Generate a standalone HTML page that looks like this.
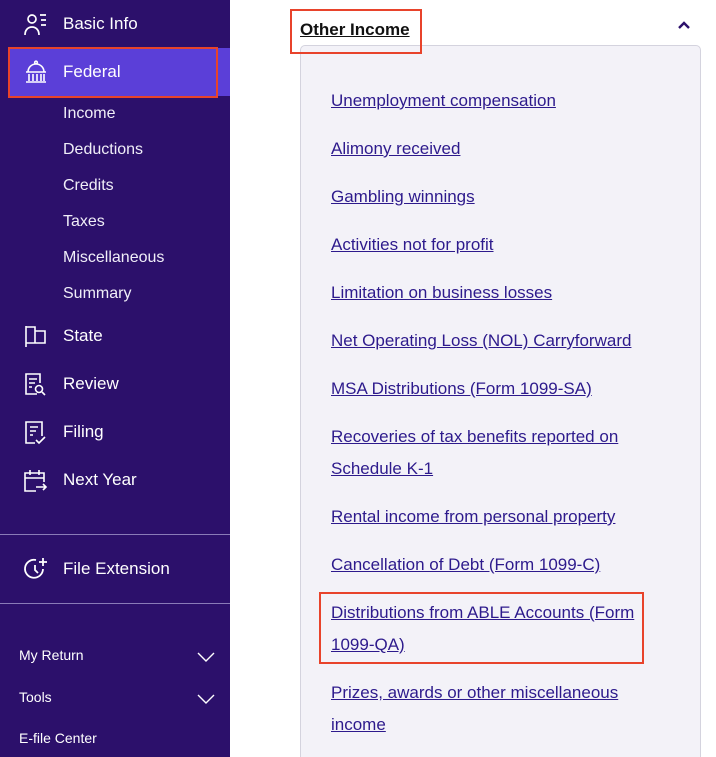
<!DOCTYPE html>
<html><head><style>
*{margin:0;padding:0;box-sizing:border-box}
html,body{width:716px;height:757px;overflow:hidden}
body{background:#fff;font-family:"Liberation Sans",sans-serif;position:relative}
#sb{position:absolute;left:0;top:0;width:230px;height:757px;background:#2c106b;color:#fff}
.it{position:absolute;left:63px;font-size:17px;line-height:20px}
.sub{position:absolute;left:63px;font-size:16px;line-height:20px;color:#f0eef8}
.ic{position:absolute;left:23px}
.sm{position:absolute;left:19px;font-size:14px;line-height:18px}
.hr{position:absolute;left:0;width:230px;height:1px;background:#8a7bb8}
.chev{position:absolute;left:196px}
#main a{position:absolute;left:331px;font-size:17px;line-height:32px;color:#2d1a8c;text-decoration:underline;width:315px}
.red{position:absolute;border:2px solid #e8432b}
</style></head><body>
<div id="sb">
<svg class="ic" style="top:12px" width="26" height="24" viewBox="0 0 26 24" fill="none" stroke="#fff" stroke-width="1.7"><circle cx="9" cy="7" r="4"/><path d="M2 23c0-5 3-8 7-8s7 3 7 8"/><path d="M17 3h6M18 8h5M18 13h5"/></svg>
<div class="it" style="top:14px">Basic Info</div>
<div style="position:absolute;left:9px;top:48px;width:221px;height:48px;background:#5b3fd8"></div>
<svg class="ic" style="top:60px" width="26" height="24" viewBox="0 0 26 24" fill="none" stroke="#fff" stroke-width="1.6"><circle cx="13" cy="2.5" r="1.3"/><path d="M5 12a8 8 0 0 1 16 0"/><path d="M3 12h20M3 22h20M6 14v7M10 14v7M14 14v7M18 14v7M21 14v7"/></svg>
<div class="it" style="top:62px">Federal</div>
<div class="sub" style="top:104px">Income</div>
<div class="sub" style="top:140px">Deductions</div>
<div class="sub" style="top:176px">Credits</div>
<div class="sub" style="top:212px">Taxes</div>
<div class="sub" style="top:248px">Miscellaneous</div>
<div class="sub" style="top:284px">Summary</div>
<svg class="ic" style="top:324px" width="26" height="24" viewBox="0 0 26 24" fill="none" stroke="#fff" stroke-width="1.6"><path d="M3 2v21M3 3h9v16H3M12 7h10v12H12"/></svg>
<div class="it" style="top:326px">State</div>
<svg class="ic" style="top:372px" width="26" height="26" viewBox="0 0 26 26" fill="none" stroke="#fff" stroke-width="1.6"><path d="M14 22H3V2h14v9"/><path d="M6 7h8M6 11h6M6 15h3"/><circle cx="16" cy="17" r="3.5"/><path d="M19 20l3 3"/></svg>
<div class="it" style="top:374px">Review</div>
<svg class="ic" style="top:420px" width="26" height="26" viewBox="0 0 26 26" fill="none" stroke="#fff" stroke-width="1.6"><path d="M12 23H3V2h16v14"/><path d="M7 7h8M7 11h6M7 15h3"/><path d="M13 20l3 3 6-6"/></svg>
<div class="it" style="top:422px">Filing</div>
<svg class="ic" style="top:468px" width="26" height="26" viewBox="0 0 26 26" fill="none" stroke="#fff" stroke-width="1.6"><path d="M13 23H2V5h19v9M2 10h19M7 2v5M16 2v5"/><path d="M13 19h10M20 16l3 3-3 3"/></svg>
<div class="it" style="top:470px">Next Year</div>
<div class="hr" style="top:534px"></div>
<svg class="ic" style="top:556px" width="26" height="26" viewBox="0 0 26 26" fill="none" stroke="#fff" stroke-width="1.8"><path d="M20 13a9 9 0 1 1-7-9"/><path d="M12 9v5l3 3M20 2v8M16 6h8"/></svg>
<div class="it" style="top:559px">File Extension</div>
<div class="hr" style="top:603px"></div>
<div class="sm" style="top:646px">My Return</div>
<svg class="chev" style="top:651px" width="20" height="12" viewBox="0 0 20 12" fill="none" stroke="#fff" stroke-width="1.4"><path d="M2 2l8 8 8-8"/></svg>
<div class="sm" style="top:688px">Tools</div>
<svg class="chev" style="top:693px" width="20" height="12" viewBox="0 0 20 12" fill="none" stroke="#fff" stroke-width="1.4"><path d="M2 2l8 8 8-8"/></svg>
<div class="sm" style="top:729px">E-file Center</div>
</div>
<div class="red" style="left:8px;top:47px;width:210px;height:51px"></div>
<div id="main">
<div style="position:absolute;left:300px;top:21px;font-size:17px;font-weight:bold;color:#111;text-decoration:underline;line-height:1">Other Income</div>
<svg style="position:absolute;left:677px;top:20px" width="14" height="10" viewBox="0 0 14 10" fill="none" stroke="#2c106b" stroke-width="2.4"><path d="M2 8l5-5 5 5"/></svg>
<div style="position:absolute;left:300px;top:45px;width:401px;height:720px;background:#f3f2f8;border:1px solid #d4d3de;border-radius:5px"></div>
<a style="top:85px">Unemployment compensation</a>
<a style="top:133px">Alimony received</a>
<a style="top:181px">Gambling winnings</a>
<a style="top:229px">Activities not for profit</a>
<a style="top:277px">Limitation on business losses</a>
<a style="top:325px">Net Operating Loss (NOL) Carryforward</a>
<a style="top:373px">MSA Distributions (Form 1099-SA)</a>
<a style="top:421px;width:300px">Recoveries of tax benefits reported on Schedule K-1</a>
<a style="top:501px">Rental income from personal property</a>
<a style="top:549px">Cancellation of Debt (Form 1099-C)</a>
<a style="top:597px;width:305px">Distributions from ABLE Accounts (Form 1099-QA)</a>
<a style="top:677px;width:300px">Prizes, awards or other miscellaneous income</a>
</div>
<div class="red" style="left:290px;top:9px;width:132px;height:45px"></div>
<div class="red" style="left:319px;top:592px;width:325px;height:72px"></div>
</body></html>
